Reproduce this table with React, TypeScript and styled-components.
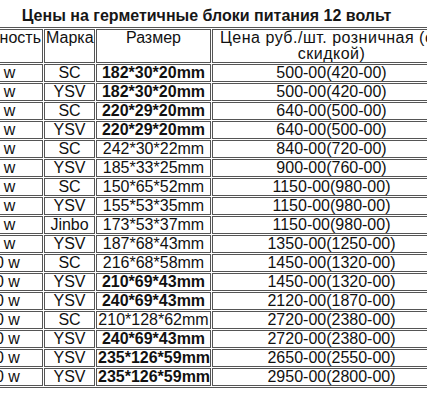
import React from "react";
import styled, { createGlobalStyle } from "styled-components";

const Global = createGlobalStyle`
  html, body {
    margin: 0;
    padding: 0;
    background: #ffffff;
    overflow: hidden;
  }
  body {
    font-family: "Liberation Sans", Arial, sans-serif;
    color: #111111;
  }
`;

const Page = styled.div`
  width: 493px;
  margin-left: -40px;
`;

const Title = styled.div`
  margin-top: 7px;
  height: 18px;
  line-height: 18px;
  font-size: 16px;
  font-weight: bold;
  text-align: center;
  color: #161616;
`;

const PriceTable = styled.table`
  margin-top: 2px;
  width: 493px;
  table-layout: fixed;
  border-collapse: separate;
  border-spacing: 1px;
  border: 1px solid #555555;
  font-size: 16px;
`;

const Head = styled.th<{ $w: number; $wide?: boolean }>`
  box-sizing: border-box;
  width: ${(p) => p.$w}px;
  border: 1px solid #555555;
  padding: 0 1px;
  line-height: 16px;
  font-weight: normal;
  text-align: center;
  vertical-align: top;
  letter-spacing: ${(p) => (p.$wide ? "0.5px" : "0")};
  color: #111111;
`;

const Cell = styled.td<{ $bold?: boolean; $shift?: boolean }>`
  border: 1px solid #555555;
  padding: ${(p) => (p.$shift ? "0 9px 0 1px" : "0 1px")};
  height: 16px;
  line-height: 16px;
  text-align: center;
  white-space: nowrap;
  overflow: hidden;
  font-weight: ${(p) => (p.$bold ? "bold" : "normal")};
  color: #111111;
`;

type Row = {
  power: string;
  brand: string;
  size: string;
  bold: boolean;
  price: string;
};

const rows: Row[] = [
  { power: "20 w", brand: "SC", size: "182*30*20mm", bold: true, price: "500-00(420-00)" },
  { power: "20 w", brand: "YSV", size: "182*30*20mm", bold: true, price: "500-00(420-00)" },
  { power: "30 w", brand: "SC", size: "220*29*20mm", bold: true, price: "640-00(500-00)" },
  { power: "30 w", brand: "YSV", size: "220*29*20mm", bold: true, price: "640-00(500-00)" },
  { power: "40 w", brand: "SC", size: "242*30*22mm", bold: false, price: "840-00(720-00)" },
  { power: "50 w", brand: "YSV", size: "185*33*25mm", bold: false, price: "900-00(760-00)" },
  { power: "60 w", brand: "SC", size: "150*65*52mm", bold: false, price: "1150-00(980-00)" },
  { power: "60 w", brand: "YSV", size: "155*53*35mm", bold: false, price: "1150-00(980-00)" },
  { power: "60 w", brand: "Jinbo", size: "173*53*37mm", bold: false, price: "1150-00(980-00)" },
  { power: "80 w", brand: "YSV", size: "187*68*43mm", bold: false, price: "1350-00(1250-00)" },
  { power: "100 w", brand: "SC", size: "216*68*58mm", bold: false, price: "1450-00(1320-00)" },
  { power: "100 w", brand: "YSV", size: "210*69*43mm", bold: true, price: "1450-00(1320-00)" },
  { power: "150 w", brand: "YSV", size: "240*69*43mm", bold: true, price: "2120-00(1870-00)" },
  { power: "200 w", brand: "SC", size: "210*128*62mm", bold: false, price: "2720-00(2380-00)" },
  { power: "200 w", brand: "YSV", size: "240*69*43mm", bold: true, price: "2720-00(2380-00)" },
  { power: "250 w", brand: "YSV", size: "235*126*59mm", bold: true, price: "2650-00(2550-00)" },
  { power: "300 w", brand: "YSV", size: "235*126*59mm", bold: true, price: "2950-00(2800-00)" },
];

export default function App() {
  return (
    <>
      <Global />
      <Page>
        <Title>Цены на герметичные блоки питания 12 вольт</Title>
        <PriceTable>
          <thead>
            <tr>
              <Head $w={81}>Мощность</Head>
              <Head $w={51}>Марка</Head>
              <Head $w={115}>Размер</Head>
              <Head $w={239} $wide>
                Цена руб./шт. розничная (со скидкой)
              </Head>
            </tr>
          </thead>
          <tbody>
            {rows.map((r, i) => (
              <tr key={i}>
                <Cell $shift>{r.power}</Cell>
                <Cell>{r.brand}</Cell>
                <Cell $bold={r.bold}>{r.size}</Cell>
                <Cell>{r.price}</Cell>
              </tr>
            ))}
          </tbody>
        </PriceTable>
      </Page>
    </>
  );
}
